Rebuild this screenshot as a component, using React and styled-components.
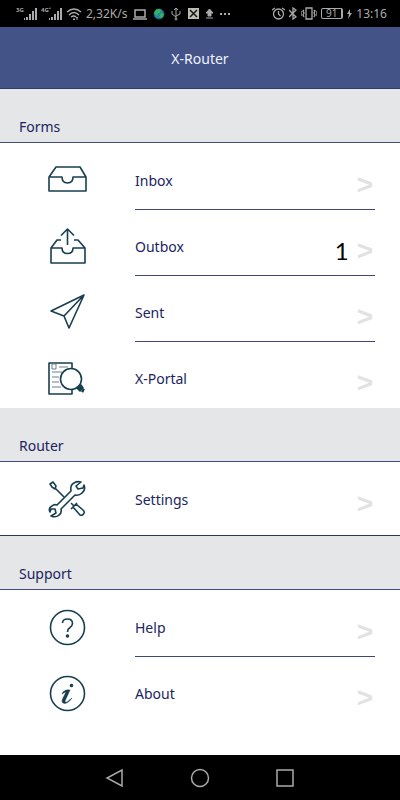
import styled, { createGlobalStyle } from 'styled-components'

const forms = [
  { name: 'Inbox', icon: 'inbox' },
  { name: 'Outbox', icon: 'outbox', count: 1 },
  { name: 'Sent', icon: 'sent' },
  { name: 'X-Portal', icon: 'portal' },
]

const support = [
  { name: 'Help', icon: 'help' },
  { name: 'About', icon: 'about' },
]

const icons = {
  inbox: (
    <path d="M2 16 L9 6 H33 L39 16 V30 H2 V16 H15 Q15 22 20.5 22 Q26 22 26 16 H39" />
  ),
  outbox: (
    <>
      <path d="M14 13 H10 L4 21 V36 H38 V21 L31 13 H27 M4 21 H15 Q15 26.5 20.5 26.5 Q26 26.5 26 21 H38" />
      <path d="M20.5 18 V2 M14 8.5 L20.5 2 L27 8.5" />
    </>
  ),
  sent: <path d="M37 2 L4 18 L17 23 L22 35 Z M37 2 L17 23" />,
  portal: (
    <>
      <path d="M25 10 V4 H2 V35 H25 V31" />
      <path d="M5 5 H9 V10 H5 Z M12 8 H21 M5 13 H15 M5 18 H12 M5 23 H12 M5 28 H14" strokeWidth="1" stroke="#6d7f88" />
      <circle cx="24" cy="20" r="10.5" fill="#fff" />
      <path d="M30 29 L34 26 L36 29 L33 32 Z" fill="#173f4f" />
      <path d="M35 31 L37 32" strokeWidth="4" />
    </>
  ),
  settings: (
    <>
      <path d="M3 5 L6 3 L9 7 L8 10 L5 8 Z M8 9 L17 18 M24 24 L27 27" />
      <path d="M24 30 L30 24 M26 28 L33 36 Q36 37 37 34 Q38 33 36 31 L29 25" />
      <path
        d="M10 26 L24 12 Q23 6 27 4 Q30 2 34 3 L29 7 L31 10 L36 9 L37 6 Q39 11 35 14 Q32 17 28 16 L14 30 Q15 34 12 36 Q9 39 4 37 L9 34 L8 30 L4 30 L3 33 Q1 29 5 27 Q7 25 10 26 Z"
        fill="#fff"
      />
    </>
  ),
  help: (
    <>
      <circle cx="20.5" cy="19.5" r="17" />
      <path d="M15.5 15 Q15.5 11 20.5 11 Q25.5 11 25.5 15.5 Q25.5 18 22.5 20 Q20.5 21 20.5 24" />
      <circle cx="20.5" cy="28" r="1" fill="#173f4f" />
    </>
  ),
  about: (
    <>
      <circle cx="20.5" cy="19.5" r="17" />
      <circle cx="24.5" cy="11.5" r="1" fill="#173f4f" />
      <path d="M16 18 Q19 15 23 16 L18 27 Q18 29 20 28 L25 24 Q20 31 16 29 Q14 28 16 24 L19 18 Q18 18 15 20 Z" fill="#173f4f" strokeWidth="0.5" />
    </>
  ),
}

const Item = ({ item, last, tall }) => (
  <Row $tall={tall}>
    <IconBox $tall={tall}>
      <Icon viewBox="0 0 40 40" aria-hidden="true">{icons[item.icon]}</Icon>
    </IconBox>
    <RowBody $last={last} $tall={tall}>
      <Name>{item.name}</Name>
      {item.count && <Count>{item.count}</Count>}
      <Arrow>&gt;</Arrow>
    </RowBody>
  </Row>
)

const Signal = () => (
  <svg width="13" height="14" viewBox="0 0 13 14" fill="currentColor">
    <path d="M0 11h1v2H0z M2 10h2v3H2z M5 7h2v6H5z M8 4h2v9H8z M11 1h2v12h-2z" />
  </svg>
)

const StatusBar = () => (
  <Status>
    <StatusLeft>
      <NetworkGroup>
        <Network>3G</Network>
        <Signal />
      </NetworkGroup>
      <NetworkGroup>
        <Network>4G⁺</Network>
        <Signal />
      </NetworkGroup>
      <StatusIcon width="16" height="14" viewBox="0 0 16 14">
        <path d="M1 5 Q8 -1 15 5 M3 8 Q8 3 13 8 M5 10 Q8 8 10 10" strokeWidth="1.5" />
        <path d="M8 11v2 M11 10v3 M7 12l1 1 1-1 M10 11l1-1 1 1" />
      </StatusIcon>
      <StatusText>2,32K/s</StatusText>
      <Notifications>
        <StatusIcon width="14" height="12" viewBox="0 0 14 12">
          <path d="M2 2h10v7H2z M0 11h14" strokeWidth="1.5" />
        </StatusIcon>
        <StatusIcon width="12" height="12" viewBox="0 0 12 12">
          <circle cx="6" cy="6" r="5" fill="#2386a3" stroke="#25607c" />
          <path d="M3 2 Q6 0 8 2 L7 5 L5 5 L4 8 L1 5 Z M8 5 L11 6 L9 10 L6 9 Z" fill="#36b558" stroke="none" />
        </StatusIcon>
        <StatusIcon width="11" height="14" viewBox="0 0 11 14">
          <path d="M5 2v9 M5 10 L1 7V4 M5 9 L9 7V4 M3 3 L5 1 L7 3" />
          <circle cx="5" cy="12" r="1" />
        </StatusIcon>
        <StatusIcon width="11" height="11" viewBox="0 0 11 11">
          <path d="M0 0h11v11H0z" fill="#bcbfb5" stroke="none" />
          <path d="M2 2l7 7 M9 2l-7 7" stroke="#17180f" strokeWidth="1.5" />
        </StatusIcon>
        <StatusIcon width="9" height="11" viewBox="0 0 9 11">
          <path d="M4.5 1 L8 5H6v3H3V5H1z M1 10h7" fill="#aaa" />
        </StatusIcon>
        <StatusIcon width="10" height="10" viewBox="0 0 10 10">
          <path d="M0 5h2 M4 5h2 M8 5h2" strokeWidth="2" />
        </StatusIcon>
      </Notifications>
    </StatusLeft>
    <StatusRight>
      <StatusIcon width="13" height="13" viewBox="0 0 13 13">
        <circle cx="6.5" cy="7" r="5" strokeWidth="1.3" />
        <path d="M6.5 4v3l2 2 M0 3l3-2 M10 1l3 2" strokeWidth="1.3" />
      </StatusIcon>
      <StatusIcon width="8" height="13" viewBox="0 0 8 13">
        <path d="M0 3l7 7-3 2V1l3 2-7 7" strokeWidth="1.3" />
      </StatusIcon>
      <StatusIcon width="16" height="13" viewBox="0 0 16 13">
        <path d="M5 1h6v11H5z M3 3L2 4l1 2-1 2 1 2 M13 3l1 1-1 2 1 2-1 2 M0 4v5 M16 4v5" strokeWidth="1.3" />
      </StatusIcon>
      <Battery>91</Battery>
      <StatusIcon width="5" height="10" viewBox="0 0 5 10">
        <path d="M3 0L0 5h2l-1 5 4-6H3z" fill="#aaa" stroke="none" />
      </StatusIcon>
      <StatusText>13:16</StatusText>
    </StatusRight>
  </Status>
)

export default function App() {
  return (
    <>
      <GlobalStyle />
      <Screen>
        <StatusBar />
        <Header>
          <Title>X-Router</Title>
        </Header>
        <Main>
          <SectionTitle>Forms</SectionTitle>
          <List>
            {forms.map((item, i) => (
              <Item key={item.name} item={item} last={i === forms.length - 1} />
            ))}
          </List>
          <SectionTitle>Router</SectionTitle>
          <List $line>
            <Item item={{ name: 'Settings', icon: 'settings' }} last tall />
          </List>
          <SectionTitle>Support</SectionTitle>
          <List>
            {support.map((item, i) => (
              <Item key={item.name} item={item} last={i === support.length - 1} />
            ))}
          </List>
        </Main>
        <NavBar>
          <NavButton aria-label="Back">
            <NavIcon viewBox="0 0 20 20"><path d="M17 2v16L2 10z" /></NavIcon>
          </NavButton>
          <NavButton aria-label="Home">
            <NavIcon viewBox="0 0 20 20"><circle cx="10" cy="10" r="8.5" /></NavIcon>
          </NavButton>
          <NavButton aria-label="Recent apps">
            <NavIcon viewBox="0 0 20 20"><path d="M2 2h16v16H2z" /></NavIcon>
          </NavButton>
        </NavBar>
      </Screen>
    </>
  )
}

const GlobalStyle = createGlobalStyle`
  * {
    box-sizing: border-box;
  }

  body {
    margin: 0;
    font-family: 'Noto Sans', sans-serif;
    font-size: 14px;
    color: #20245f;
    background-color: #ffffff;
  }
`

const Screen = styled.div`
  min-height: 100vh;
  display: flex;
  flex-direction: column;
`

const Status = styled.div`
  height: 27px;
  padding: 0 13px 0 16px;
  display: flex;
  justify-content: space-between;
  align-items: center;
  background-color: #000000;
  color: #aaaaaa;
`

const StatusLeft = styled.div`
  display: flex;
  align-items: center;
  gap: 4px;
`

const NetworkGroup = styled.div`
  height: 14px;
  display: flex;
`

const Notifications = styled.div`
  margin-left: 2px;
  display: flex;
  align-items: center;
  gap: 6px;
`

const StatusRight = styled.div`
  display: flex;
  align-items: center;
  gap: 4px;
`

const StatusIcon = styled.svg`
  fill: none;
  stroke: #aaaaaa;
  flex-shrink: 0;
`

const StatusText = styled.span`
  font-size: 12px;
  line-height: 16px;
`

const Network = styled.span`
  width: 8px;
  font-size: 6px;
  line-height: 6px;
  font-weight: bold;
  white-space: nowrap;
`

const Battery = styled.span`
  width: 22px;
  border: 1px solid #aaaaaa;
  border-right-width: 2px;
  border-radius: 2px;
  font-size: 10px;
  line-height: 9px;
  text-align: center;
`

const Header = styled.header`
  height: 62px;
  display: flex;
  justify-content: center;
  align-items: center;
  padding-top: 2px;
  border-bottom: 1px solid #303a68;
  background-color: #435287;
`

const Title = styled.h1`
  margin: 0;
  font-size: 14px;
  line-height: 20px;
  font-weight: normal;
  color: #eef2ff;
`

const Main = styled.main`
  flex: 1;
`

const SectionTitle = styled.h2`
  height: 54px;
  margin: 0;
  padding: 0 19px 5px;
  display: flex;
  align-items: flex-end;
  font-size: 14px;
  line-height: 20px;
  font-weight: normal;
  border-bottom: 1px solid #424b7b;
  background-color: #e5e6e8;
`

const List = styled.ul`
  margin: 0;
  padding: 1px 0 0;
  list-style: none;
  border-bottom: ${({ $line }) => ($line ? '1px solid #26345f' : 'none')};
`

const Row = styled.li`
  height: ${({ $tall }) => ($tall ? '72px' : '66px')};
  display: flex;
`

const IconBox = styled.div`
  width: 135px;
  padding-top: ${({ $tall }) => ($tall ? '0' : '8px')};
  padding-right: 1px;
  display: flex;
  justify-content: center;
  align-items: center;
  flex-shrink: 0;
`

const Icon = styled.svg`
  width: 40px;
  height: 40px;
  fill: none;
  stroke: #173f4f;
  stroke-width: 1.6;
  stroke-linejoin: round;
`

const RowBody = styled.div`
  flex: 1;
  margin-right: 25px;
  padding-top: ${({ $tall }) => ($tall ? '2px' : '8px')};
  display: flex;
  align-items: center;
  border-bottom: 1px solid ${({ $last }) => ($last ? 'transparent' : '#3e4678')};
`

const Name = styled.a.attrs({ href: '#' })`
  flex: 1;
  line-height: 20px;
  color: inherit;
  text-decoration: none;
`

const Count = styled.span`
  margin-right: 8px;
  padding-top: 8px;
  font-family: Lato, sans-serif;
  font-size: 24px;
  line-height: 28px;
  color: #000000;
`

const Arrow = styled.span`
  margin-right: 2px;
  padding-top: 8px;
  font-family: 'Liberation Sans', sans-serif;
  font-size: 28px;
  line-height: 28px;
  font-weight: bold;
  color: #e2e2e2;
`

const NavBar = styled.nav`
  height: 45px;
  display: flex;
  justify-content: center;
  align-items: center;
  gap: 65px;
  background-color: #000000;
`

const NavButton = styled.button`
  width: 20px;
  height: 20px;
  padding: 0;
  border: none;
  background: none;
`

const NavIcon = styled.svg`
  width: 20px;
  height: 20px;
  display: block;
  fill: none;
  stroke: #aaaaaa;
  stroke-width: 1.5;
`
